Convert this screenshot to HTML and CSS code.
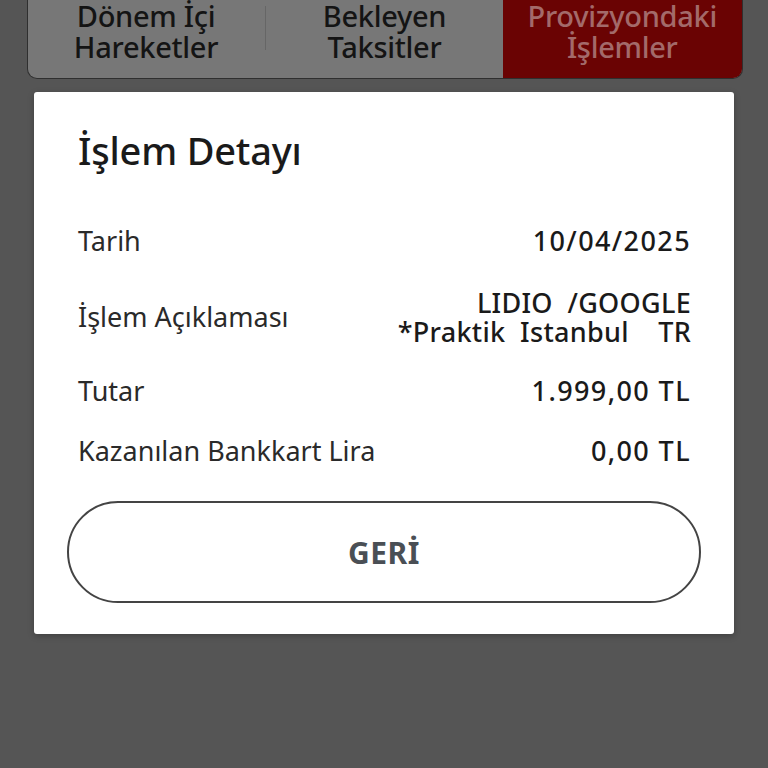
FILE: index.html
```html
<!DOCTYPE html>
<html lang="tr">
<head>
<meta charset="utf-8">
<link rel="stylesheet" href="styles.css">
</head>
<body>
<div class="screen">
  <div class="tabs">
    <div class="tab"><span>Dönem İçi<br>Hareketler</span></div>
    <div class="divider"></div>
    <div class="tab"><span>Bekleyen<br>Taksitler</span></div>
    <div class="tab active"><span>Provizyondaki<br>İşlemler</span></div>
  </div>
  <div class="modal">
    <h1 class="title">İşlem Detayı</h1>
    <div class="rows">
      <div class="row"><div class="label">Tarih</div><div class="value">10/04/2025</div></div>
      <div class="row"><div class="label">İşlem Açıklaması</div><div class="value pre">LIDIO  /GOOGLE
*Praktik  Istanbul    TR</div></div>
      <div class="row"><div class="label">Tutar</div><div class="value">1.999,00 TL</div></div>
      <div class="row"><div class="label">Kazanılan Bankkart Lira</div><div class="value">0,00 TL</div></div>
    </div>
    <button class="back">GERİ</button>
  </div>
</div>
</body>
</html>
```

FILE: styles.css
```css
* { box-sizing: border-box; }
html, body { margin: 0; padding: 0; }
body {
  background: #555555;
  font-family: "Noto Sans", "Open Sans", sans-serif;
  width: 768px;
  height: 768px;
  overflow: hidden;
}
.screen {
  display: flex;
  flex-direction: column;
  align-items: center;
}
.tabs {
  width: 716px;
  margin-left: 1px;
  height: 79px;
  display: flex;
  align-items: stretch;
  background: #777777;
  border: 1.5px solid #2f2f2f;
  border-top: none;
  border-radius: 0 0 10px 10px;
  overflow: hidden;
}
.tab {
  flex: 0 0 237px;
  display: flex;
  align-items: flex-end;
  justify-content: center;
  padding-bottom: 16px;
  font-size: 29px;
  line-height: 31px;
  font-weight: 500;
  color: #141414;
  text-align: center;
  letter-spacing: -0.3px;
}
.tab span { display: block; }
.divider {
  width: 1.5px;
  background: #666;
  margin: 6px 0 28px 0;
}
.tab.active {
  flex: 1 1 auto;
  background: #6a0303;
  color: #a36a6a;
}
.modal {
  margin-top: 13px;
  width: 700px;
  background: #ffffff;
  border-radius: 3px;
  padding: 35px 33px 31px 33px;
  box-shadow: 0 2px 6px rgba(0,0,0,0.25);
}
.title {
  margin: 0 0 53px 11px;
  font-size: 38px;
  line-height: 46px;
  font-weight: 500;
  color: #1a1a1a;
  letter-spacing: -0.2px;
}
.rows {
  display: flex;
  flex-direction: column;
  gap: 30px;
  padding: 0 11px;
}
.row {
  display: flex;
  justify-content: space-between;
  align-items: center;
  font-size: 27px;
  line-height: 30px;
  color: #1e1e1e;
}
.row:nth-child(2) { margin-top: 2px; }
.label { font-weight: 400; color: #2a2a2a; }
.value {
  font-weight: 500;
  text-align: right;
  color: #1a1a1a;
  letter-spacing: 1.4px;
  margin-right: -1px;
}
.value.pre { white-space: pre; line-height: 29px; letter-spacing: 0.3px; }
.back {
  display: block;
  width: 100%;
  margin-top: 35px;
  height: 102px;
  background: #fff;
  border: 2px solid #444;
  border-radius: 51px;
  font-family: "Noto Sans", sans-serif;
  font-size: 30px;
  font-weight: 700;
  color: #4a4f55;
  letter-spacing: 0.5px;
}
```
